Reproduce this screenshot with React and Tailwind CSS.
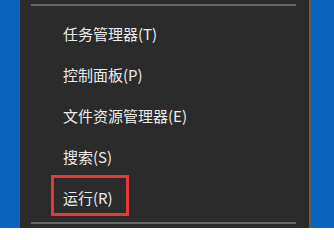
const items = ["任务管理器(T)", "控制面板(P)", "文件资源管理器(E)", "搜索(S)", "运行(R)"];

export default function App() {
  return (
    <div className="flex h-[228px] w-[334px] overflow-hidden bg-[#0a63bd]">
      {/* desktop strip, left */}
      <div className="w-[19px] shrink-0 bg-[#0a63bd]"></div>

      {/* context menu */}
      <div
        className="flex w-[292px] shrink-0 flex-col border-l border-r-2 border-l-[#4f5b66] border-r-[#5c5c5c] bg-[#2b2b2b] pt-[4px]"
        style={{ fontFamily: '"Noto Sans CJK SC", "Noto Sans", sans-serif' }}
      >
        <div className="ml-[11px] mr-[13px] h-[2px] bg-[#676767]"></div>

        <ul className="mt-[7px] flex flex-col">
          {items.map((label, i) => (
            <li key={label} className="relative flex h-[41px] items-center pl-[43px] text-[15px] leading-none text-[#ebebeb]">
              {label}
              {i === items.length - 1 && (
                <span className="absolute left-[31px] top-[-2px] h-[41px] w-[78px] border-[3px] border-[#e5383b]"></span>
              )}
            </li>
          ))}
        </ul>

        <div className="ml-[11px] mr-[13px] mt-[4px] h-[2px] bg-[#676767]"></div>
      </div>

      {/* desktop strip, right */}
      <div className="flex-1 bg-[#0a63bd]"></div>
    </div>
  );
}
